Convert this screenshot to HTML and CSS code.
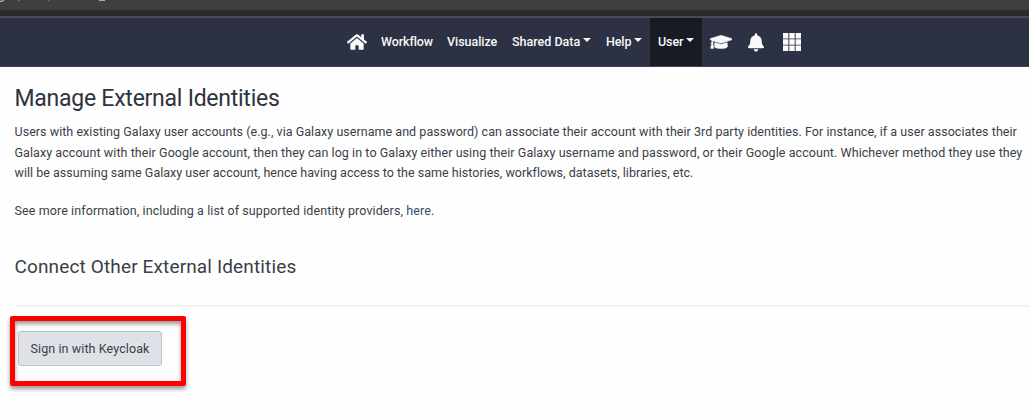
FILE: index.html
```html
<!DOCTYPE html>
<html lang="en">
<head>
<meta charset="utf-8">
<title>Manage External Identities</title>
<link rel="stylesheet" href="styles.css">
</head>
<body>
<div class="browser-bar">
  <svg class="browser-marks" width="120" height="3" viewBox="0 0 120 3"><path d="M0 1.2h2.6L4 0" fill="none" stroke="#ddd"/><path d="M18 0h1.5v1H18zM48 0h1.3v1H48z" fill="#777"/><path d="M99 0h6v1h-6z" fill="#aaa"/></svg>
</div>
<nav class="masthead">
  <a class="icon home"><svg width="20" height="18" viewBox="0 0 576 512"><path d="M280.37 148.26L96 300.11V464a16 16 0 0 0 16 16l112.06-.29a16 16 0 0 0 15.92-16V368a16 16 0 0 1 16-16h64a16 16 0 0 1 16 16v95.64a16 16 0 0 0 16 16.05L464 480a16 16 0 0 0 16-16V300L295.67 148.26a12.19 12.19 0 0 0-15.3 0zM571.6 251.47L488 182.56V44.05a12 12 0 0 0-12-12h-56a12 12 0 0 0-12 12v72.61L318.47 43a48 48 0 0 0-61 0L4.34 251.47a12 12 0 0 0-1.6 16.9l25.5 31A12 12 0 0 0 45.15 301l235.22-193.74a12.19 12.19 0 0 1 15.3 0L530.9 301a12 12 0 0 0 16.9-1.6l25.5-31a12 12 0 0 0-1.7-16.93z"/></svg></a>
  <a class="item workflow">Workflow</a>
  <a class="item visualize">Visualize</a>
  <a class="item shared">Shared Data<i class="caret"></i></a>
  <a class="item help">Help<i class="caret"></i></a>
  <a class="item user">User<i class="caret"></i></a>
  <a class="icon cap"><svg width="22" height="18" viewBox="0 0 640 512"><path d="M622.34 153.2L343.4 67.5c-15.2-4.67-31.6-4.67-46.79 0L17.66 153.2c-23.54 7.23-23.54 38.36 0 45.59l48.63 14.94c-10.67 13.19-17.23 29.28-17.88 46.9C38.78 266.15 32 276.11 32 288c0 10.78 5.68 19.85 13.86 25.65L20.33 428.53C18.11 438.52 25.71 448 35.94 448h56.11c10.24 0 17.84-9.48 15.62-19.47L82.14 313.65C90.32 307.85 96 298.78 96 288c0-11.57-6.47-21.25-15.66-26.87.76-15.02 8.44-28.3 20.69-36.72L296.6 284.5c9.06 2.78 26.44 6.25 46.79 0l278.95-85.7c23.55-7.24 23.55-38.36 0-45.6zM352.79 315.09c-28.53 8.76-52.84 3.92-65.59 0l-145.02-44.55L128 384c0 35.35 85.96 64 192 64s192-28.65 192-64l-14.18-113.47-145.03 44.56z"/></svg></a>
  <a class="icon bell"><svg width="16" height="19" viewBox="0 0 448 512"><path d="M224 512c35.32 0 63.97-28.65 63.97-64H160.03c0 35.35 28.65 64 63.97 64zm215.39-149.71c-19.32-20.76-55.47-51.99-55.47-154.29 0-77.7-54.48-139.9-127.94-155.16V32c0-17.67-14.32-32-31.98-32s-31.98 14.33-31.98 32v20.84C118.56 68.1 64.08 130.3 64.08 208c0 102.3-36.15 133.53-55.47 154.29-6 6.45-8.66 14.16-8.61 21.71.11 16.4 12.98 32 32.1 32h383.8c19.12 0 32-15.6 32.1-32 .05-7.55-2.61-15.27-8.61-21.71z"/></svg></a>
  <a class="icon grid"><svg width="18" height="18" viewBox="0 0 18 18"><path d="M0 0h5.4v5.4H0zM6.3 0h5.4v5.4H6.3zM12.6 0H18v5.4h-5.4zM0 6.3h5.4v5.4H0zM6.3 6.3h5.4v5.4H6.3zM12.6 6.3H18v5.4h-5.4zM0 12.6h5.4V18H0zM6.3 12.6h5.4V18H6.3zM12.6 12.6H18V18h-5.4z"/></svg></a>
</nav>
<main class="content">
  <h1 class="title">Manage External Identities</h1>
  <p class="copy"><span class="line first">Users with existing Galaxy user accounts (e.g., via Galaxy username and password) can associate their account with their 3rd party identities. For instance, if a user associates their</span>
  <span class="line second">Galaxy account with their Google account, then they can log in to Galaxy either using their Galaxy username and password, or their Google account. Whichever method they use they</span>
  <span class="line third">will be assuming same Galaxy user account, hence having access to the same histories, workflows, datasets, libraries, etc.</span></p>
  <p class="copy more"><span class="line fourth">See more information, including a list of supported identity providers, <a class="link">here</a>.</span></p>
  <h2 class="subtitle">Connect Other External Identities</h2>
  <hr class="rule">
  <div class="highlight"><button class="signin">Sign in with Keycloak</button></div>
</main>
</body>
</html>
```
FILE: styles.css
```css
* { box-sizing: border-box; }
body { margin: 0; height: 419px; overflow: hidden; background: #fefefe; color: #2f333d; font-family: Roboto, "Liberation Sans", sans-serif; font-size: 12.5px; }
.browser-bar { height: 16px; background: #3f3f3f; border-bottom: 6px solid #2b2b2b; }
.browser-marks { display: block; }
.masthead { height: 51px; display: flex; align-items: stretch; padding-left: 347px; background: #2c3143; border-top: 2px solid #4a4a50; border-bottom: 1px solid #45434f; color: #f8f8f8; }
.icon { display: flex; align-items: center; }
.icon svg { display: block; fill: #fafafa; }
.cap svg { stroke: #fafafa; stroke-width: 14px; }
.item { display: flex; align-items: center; font-size: 12.5px; font-weight: 500; letter-spacing: -.1px; white-space: nowrap; flex: none; padding-bottom: 1px; }
.home { width: 34px; }
.workflow { width: 66px; }
.visualize { width: 65px; letter-spacing: -.05px; }
.shared { width: 94px; letter-spacing: 0; }
.help { width: 44px; }
.user { width: 52px; padding-left: 8px; background: #181b24; }
.cap { width: 46px; padding-left: 8px; }
.bell { width: 35px; }
.caret { border: 4px solid transparent; border-top-color: #f8f8f8; border-bottom: 0; margin: 0 0 3px 3px; }
.content { padding-left: 14.5px; }
.title { margin: 0; padding-top: 17px; height: 55px; font-size: 23px; line-height: 30px; font-weight: 400; letter-spacing: -.25px; }
.copy { margin: 0; line-height: 20.7px; color: #3a3e46; }
.line { display: block; width: max-content; white-space: nowrap; }
.first { letter-spacing: .04px; }
.second { letter-spacing: .066px; }
.third { letter-spacing: .02px; }
.fourth { letter-spacing: .1px; }
.more { margin-top: 17px; }
.link { color: #35506f; }
.subtitle { margin: 32px 0 0; font-size: 19px; line-height: 26px; font-weight: 400; letter-spacing: .14px; color: #3a3e46; }
.rule { margin: 25px 0 0; border: 0; height: 2px; background: #f1f1f1; }
.highlight { width: 176px; height: 70px; margin: 9px 0 0 -4.5px; border: 5px solid #fe0000; border-radius: 2px; padding: 10px 0 0 3px; box-shadow: 0 3px 4px rgba(0,0,0,.4), inset 0 3px 4px rgba(0,0,0,.4); }
.signin { display: block; width: 144px; height: 35px; padding: 0; border: 1px solid #bdc1c8; border-radius: 3px; background: #dee1e7; color: #3a3e46; font: 12.5px Roboto, "Liberation Sans", sans-serif; letter-spacing: .1px; }
```
